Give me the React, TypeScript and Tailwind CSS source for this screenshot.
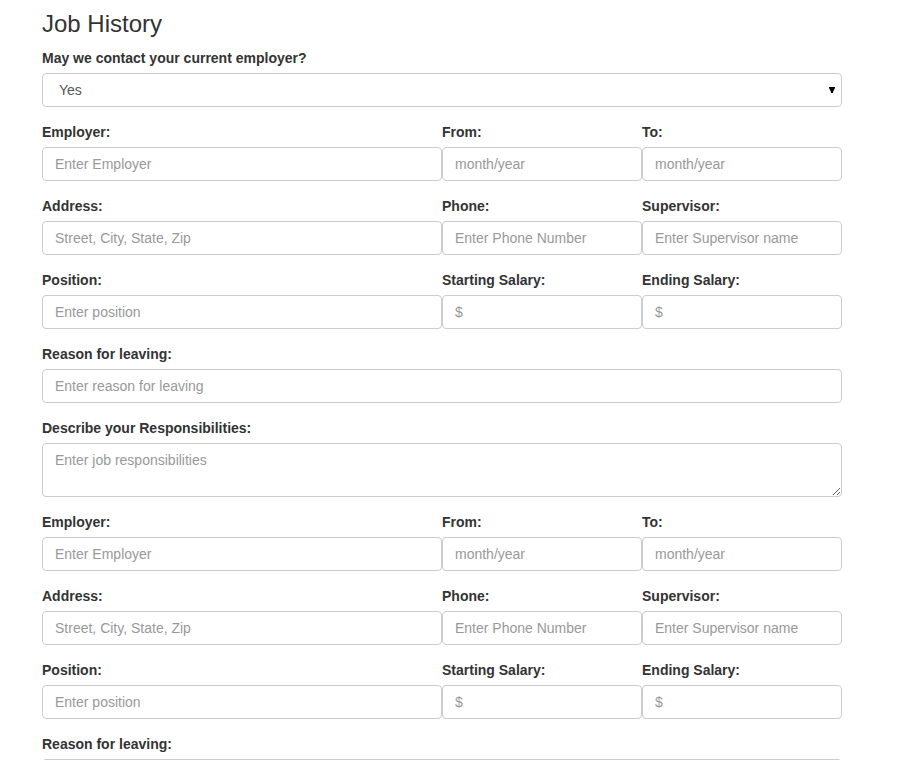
import { useId } from "react";

const labelClass = "mb-[5px] block text-sm leading-5 font-bold";
const fieldClass =
  "block h-[34px] w-full rounded border border-[#ccc] bg-white px-3 py-1.5 text-sm leading-5 text-[#555] placeholder:text-[#999] focus:border-[#66afe9] focus:outline-none";

type FieldProps = { label: string; placeholder: string; className?: string };

function Field({ label, placeholder, className = "" }: FieldProps) {
  const id = useId();
  return (
    <div className={className}>
      <label htmlFor={id} className={labelClass}>{label}</label>
      <input id={id} type="text" placeholder={placeholder} className={fieldClass} />
    </div>
  );
}

function Employment() {
  const id = useId();
  return (
    <>
      <div className="grid grid-cols-4 gap-y-[15px]">
        <Field label="Employer:" placeholder="Enter Employer" className="col-span-2" />
        <Field label="From:" placeholder="month/year" />
        <Field label="To:" placeholder="month/year" />
        <Field label="Address:" placeholder="Street, City, State, Zip" className="col-span-2" />
        <Field label="Phone:" placeholder="Enter Phone Number" />
        <Field label="Supervisor:" placeholder="Enter Supervisor name" />
        <Field label="Position:" placeholder="Enter position" className="col-span-2" />
        <Field label="Starting Salary:" placeholder="$" />
        <Field label="Ending Salary:" placeholder="$" />
      </div>
      <Field label="Reason for leaving:" placeholder="Enter reason for leaving" />
      <div>
        <label htmlFor={id} className={labelClass}>Describe your Responsibilities:</label>
        <textarea
          id={id}
          rows={2}
          placeholder="Enter job responsibilities"
          className="block w-full resize-y rounded border border-[#ccc] bg-white px-3 py-1.5 text-sm leading-5 text-[#555] placeholder:text-[#999] focus:border-[#66afe9] focus:outline-none"
        />
      </div>
    </>
  );
}

export default function App() {
  return (
    <main className="h-screen overflow-y-auto bg-white font-['Liberation_Sans',Arial,sans-serif] text-sm text-[#333] [scrollbar-width:none]">
      <form className="mr-[74px] ml-[42px] flex flex-col gap-[15px] pt-[9px]">
        <div>
          <h1 className="mb-[9px] text-2xl leading-[30px] font-normal">Job History</h1>
          <label htmlFor="contact" className={labelClass}>May we contact your current employer?</label>
          <div className="relative">
            <select
              id="contact"
              className="block h-[34px] w-full appearance-none rounded border border-[#ccc] bg-white px-4 py-1.5 text-sm leading-5 text-[#555] focus:border-[#66afe9] focus:outline-none"
            >
              <option>Yes</option>
              <option>No</option>
            </select>
            <svg viewBox="0 0 6 6" className="pointer-events-none absolute top-[14px] right-[7px] size-1.5 fill-black" aria-hidden="true">
              <path d="M0 0h6v1L4 5v1H2V5L0 1z" />
            </svg>
          </div>
        </div>
        <Employment />
        <Employment />
      </form>
    </main>
  );
}
